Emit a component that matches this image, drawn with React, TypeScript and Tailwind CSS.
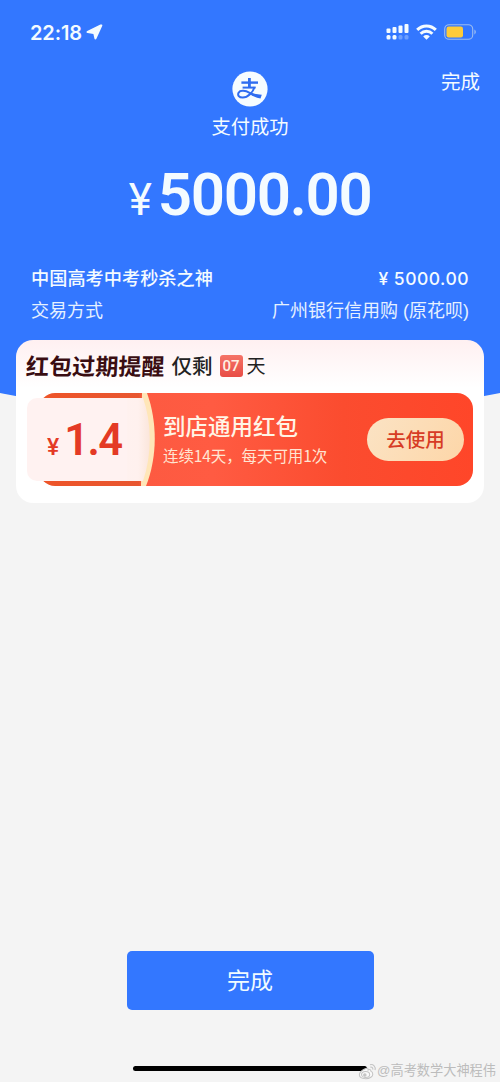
import { FC, ReactNode } from "react";

const SignalIcon: FC = () => (
	<svg width="24" height="18" viewBox="0 0 24 18" fill="#f4fbff">
		<rect x="1.5" y="5.5" width="4" height="4.5" rx="1" />
		<rect x="7.5" y="4" width="4" height="6" rx="1" />
		<rect x="13.5" y="2.5" width="4" height="7.5" rx="1" />
		<rect x="19.5" y="1" width="4" height="9" rx="1" />
		<rect x="1.5" y="12" width="4" height="4.5" rx="1.5" />
		<rect x="7.5" y="12" width="4" height="4.5" rx="1.5" />
		<rect x="13.5" y="12" width="4" height="4.5" rx="1.5" opacity="0.3" />
		<rect x="19.5" y="12" width="4" height="4.5" rx="1.5" opacity="0.3" />
	</svg>
);

const WifiIcon: FC = () => (
	<svg width="21" height="16" viewBox="0 0 21 16" fill="none" stroke="#f4fbff" strokeWidth="3">
		<path d="M1.2 5.9C6.4 0.6 14.6 0.6 19.8 5.9" />
		<path d="M4.6 9.8C7.9 6.5 13.1 6.5 16.4 9.8" />
		<path d="M10.5 15.8L7.2 12.4C9.1 10.6 11.9 10.6 13.8 12.4Z" fill="#f4fbff" stroke="none" />
	</svg>
);

const BatteryIcon: FC = () => (
	<svg width="33" height="16" viewBox="0 0 33 16">
		<rect x="0.7" y="0.7" width="28" height="14.6" rx="4.4" fill="none" stroke="#9cbcf0" strokeWidth="1.1" />
		<rect x="2.5" y="2.6" width="16.5" height="10.8" rx="2.2" fill="#fdcb3a" />
		<path d="M30.4 5.6C32.3 6.4 32.3 9.6 30.4 10.4Z" fill="#9cbcf0" />
	</svg>
);

const AlipayLogo: FC = () => (
	<svg width="36" height="36" viewBox="0 0 36 36" fill="none">
		<circle cx="18" cy="18" r="17.6" fill="#f6fcff" />
		<g stroke="#2f6df0">
			<path d="M9.4 11.6H26" strokeWidth="2.4" />
			<path d="M17.4 7V16.6" strokeWidth="2.8" />
			<path d="M10.6 16.6H23.6" strokeWidth="2" />
			<path d="M22.6 16C20.8 21.4 16 26.6 10.8 26.6C6.8 26.6 5.4 24.2 6.6 21.8C8.2 18.8 13.6 19.6 17.6 21.8C21 23.6 24.6 25 28.4 25.5" strokeWidth="2" />
		</g>
		<path d="M19 21.4C22.4 22.9 25.5 23.4 29.8 23.7L28.5 27.4C24.5 26.8 21 25.3 17.8 23.2Z" fill="#2f6df0" />
	</svg>
);

const WeiboIcon: FC = () => (
	<svg width="19" height="17" viewBox="0 0 20 18" fill="none" stroke="#c4c4c4" strokeWidth="1.1">
		<path d="M13.5 8.6C13.9 6.8 12.4 6.6 10.6 7.4C10.9 5.6 9.6 4.9 7.4 6.1C4.2 7.7 1.4 10.3 1.4 12.5C1.4 15.2 4.8 16.6 8.2 16.6C12.6 16.6 15.6 14.1 15.6 11.8C15.6 10 14.7 9.1 13.5 8.6Z" fill="#fafafa" />
		<ellipse cx="8" cy="12.2" rx="4.3" ry="3.2" />
		<circle cx="7.2" cy="12.6" r="1.3" fill="#c4c4c4" />
		<path d="M12.6 1.8C16.2 1 19 3.8 18 7.6M12.9 4.4C14.8 4 16 5.4 15.6 7" />
	</svg>
);

const Row: FC<{ children: ReactNode; className?: string }> = ({ children, className }) => (
	<div className={`flex justify-between whitespace-nowrap pl-[31px] pr-[31px] ${className}`}>{children}</div>
);

const Coupon: FC = () => (
	<div className="relative mx-[11px] mt-[13px] flex h-[93px]">
		<div className="absolute inset-y-0 right-0 left-[12px] rounded-[16px] bg-[linear-gradient(90deg,#ee5428_0%,#e85630_23%,#fd5a41_24%,#ff5b42_40%,#fb4c2f_70%,#ff4629_100%)]" />
		<svg className="absolute top-0 left-[76px]" width="54" height="93" viewBox="0 0 54 93">
			<defs>
				<linearGradient id="ticketEdge" x1="0" x2="1" y1="0" y2="0">
					<stop offset="0" stopColor="#fff2f1" />
					<stop offset="0.75" stopColor="#fff1ee" />
					<stop offset="1" stopColor="#fbe6db" />
				</linearGradient>
			</defs>
			<path d="M39 0H44C54.5 29 54.5 64 43 93H38Z" fill="#ffe6b8" />
			<path d="M0 5H40C49 30 49 62 40 88H0Z" fill="url(#ticketEdge)" />
		</svg>
		<div className="relative my-[5px] flex w-[100px] items-baseline rounded-l-[10px] bg-[#fff2f1] pl-[20px] font-['Roboto','Noto_Sans_CJK_SC',sans-serif] text-[#e43a25]">
			<span className="text-[23px] leading-[85px] font-medium">¥</span>
			<span className="ml-[5px] text-[43.5px] leading-[85px] font-semibold tracking-[-1.6px]">1.4</span>
		</div>
		<div className="relative ml-[36px] flex flex-1 flex-col whitespace-nowrap text-[#fff5e6]">
			<span className="mt-[19px] text-[22.5px] leading-[32px] font-medium">到店通用红包</span>
			<span className="-mt-px font-['Noto_Sans_CJK_SC',sans-serif] text-[15.5px] leading-[24px] tracking-[-0.1px] text-[#ffe5d3]">
				连续14天，每天可用1次
			</span>
		</div>
		<button className="relative mt-[25px] mr-[9px] h-[43px] w-[97px] rounded-full bg-[linear-gradient(120deg,#fbe3c4,#fdd6a8)] pt-[3px] text-[19.5px] font-medium text-[#d73c25]">
			去使用
		</button>
	</div>
);

const App: FC = () => {
	return (
		<div className="relative flex h-[1082px] w-[500px] flex-col overflow-hidden bg-[#f4f4f4] font-['Liberation_Sans','Noto_Sans_CJK_SC',sans-serif]">
			<div className="absolute top-0 -left-[100px] h-[414px] w-[700px] bg-[#3377ff] [border-bottom-left-radius:50%_70px] [border-bottom-right-radius:50%_70px]" />

			<header className="relative flex h-[340px] flex-col text-[#f4fbff]">
				<div className="mt-[20px] flex h-[24px] items-center pr-[23px] pl-[30px]">
					<span className="pt-px font-['Inter',sans-serif] text-[20px] font-semibold tracking-[-0.1px]">22:18</span>
					<svg className="ml-[4px]" width="17" height="16" viewBox="0 0 17 16" fill="#f4fbff">
						<path d="M15.8 0.5C16.4 0.7 16.5 1.2 16.2 1.9L10.4 14.8C9.9 15.8 8.6 15.7 8.4 14.6L7.4 9.9L1.6 8.9C0.3 8.7 0.1 7.5 1.2 6.9L14.4 0.6C14.9 0.4 15.4 0.3 15.8 0.5Z" />
					</svg>
					<div className="ml-auto flex items-center">
						<SignalIcon />
						<div className="ml-[7px]"><WifiIcon /></div>
						<div className="ml-[7px]"><BatteryIcon /></div>
					</div>
				</div>

				<div className="mt-[24px] flex justify-end pr-[20px] text-[19.5px] leading-[28px]">完成</div>
				<div className="-mt-[25px] flex flex-col items-center">
					<AlipayLogo />
					<span className="mt-[7px] text-[19.3px] leading-[28px]">支付成功</span>
				</div>

				<div className="mt-[18px] flex h-[70px] items-baseline justify-center font-['Roboto',sans-serif]">
					<span className="text-[44px] leading-[70px]">¥</span>
					<span className="ml-[6px] text-[60px] leading-[70px] font-semibold tracking-[-1.3px]">5000.00</span>
				</div>

				<Row className="mt-[33px] text-[18.2px] leading-[32px] font-medium">
					<span>中国高考中考秒杀之神</span>
					<span className="font-['Inter',sans-serif] text-[17.5px] tracking-[0.5px]">¥ 5000.00</span>
				</Row>
				<Row className="text-[18px] leading-[32px] text-[#e6f1ff]">
					<span>交易方式</span>
					<span>广州银行信用购 (原花呗)</span>
				</Row>
			</header>

			<section className="relative mx-[16px] h-[163px] rounded-[17px] bg-[linear-gradient(180deg,#fff0f1_0px,#ffffff_48px)]">
				<div className="flex h-[40px] items-end whitespace-nowrap pl-[10px]">
					<span className="-mb-[2px] -skew-x-3 text-[23px] leading-[30px] font-bold tracking-[0.1px] text-[#3a0d12]">红包过期提醒</span>
					<span className="-mb-[2px] ml-[7px] text-[20.5px] leading-[30px] font-medium text-[#222]">仅剩</span>
					<span className="mb-[3px] ml-[7px] flex h-[22px] w-[23px] items-center justify-center rounded-[3px] bg-[linear-gradient(180deg,#f57468,#e84c45)] font-['Roboto',sans-serif] text-[15px] font-medium text-[#fff0e4]">
						07
					</span>
					<span className="-mb-[2px] ml-[4px] text-[19px] leading-[30px] text-[#222]">天</span>
				</div>
				<Coupon />
			</section>

			<button className="relative mx-auto mt-[448px] h-[59px] w-[247px] shrink-0 rounded-[5px] bg-[#3377ff] pt-[2px] text-[23px] text-[#f0fbff]">
				完成
			</button>

			<div className="relative mt-[56px] h-[5px] w-[234px] shrink-0 self-center rounded-full bg-black" />
			<div className="absolute right-[4px] bottom-px flex items-center whitespace-nowrap text-[13.2px] leading-[20px] text-[#bcbcbc]">
				<WeiboIcon />
				<span>@高考数学大神程伟</span>
			</div>
		</div>
	);
};

export default App;
